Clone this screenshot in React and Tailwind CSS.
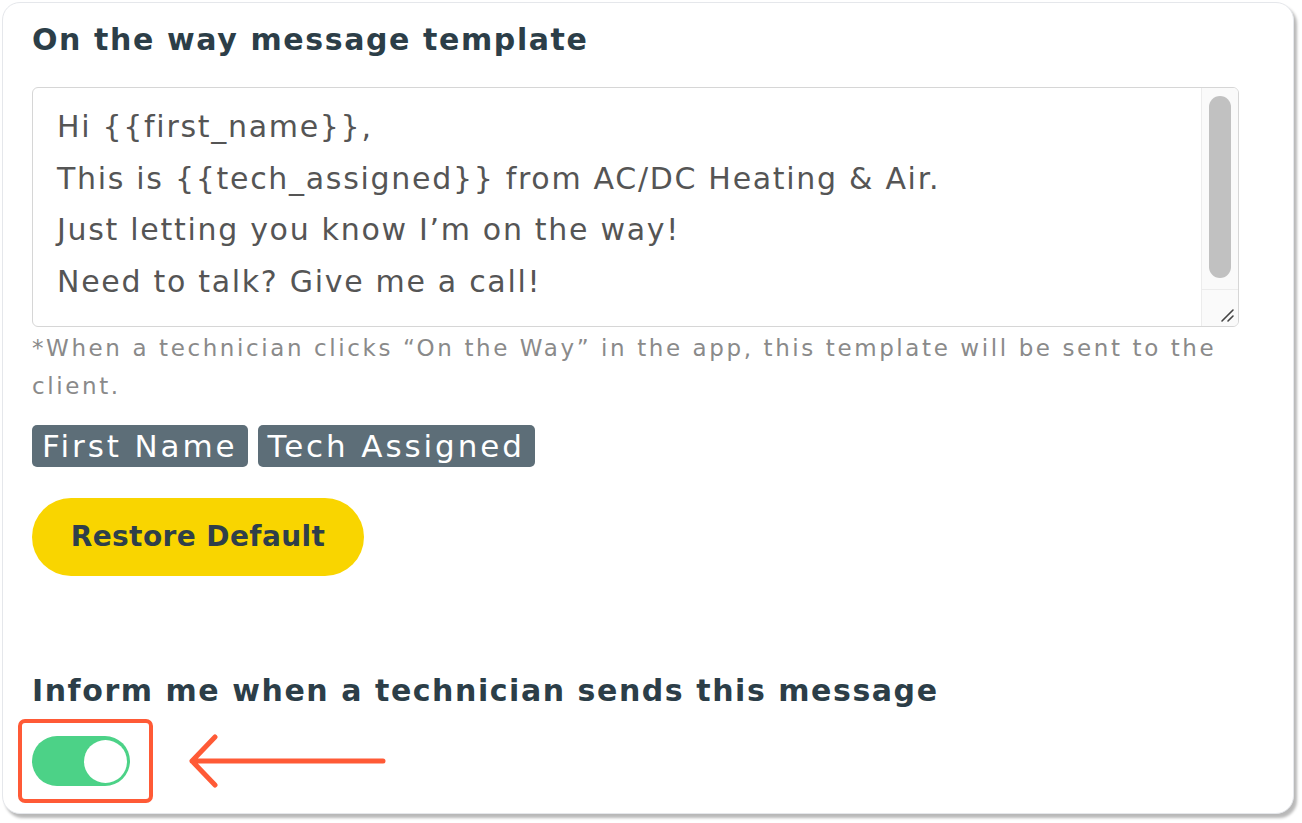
export default function App() {
  const lines = [
    "Hi {{first_name}},",
    "This is {{tech_assigned}} from AC/DC Heating & Air.",
    "Just letting you know I’m on the way!",
    "Need to talk? Give me a call!",
  ];
  return (
    <div className="w-[1302px] h-[823px] bg-white p-[2px] font-['DejaVu_Sans',sans-serif]">
      <div className="w-[1292px] h-[812px] rounded-[18px] border border-gray-200 bg-white shadow-[3px_4px_3px_rgba(0,0,0,0.28)] pl-[29px] pr-[58px] pt-[17px] flex flex-col">
        <h2 className="text-[30px] leading-[40px] font-bold text-[#2c3e48] tracking-[1.6px]">
          On the way message template
        </h2>

        <div className="mt-[27px] h-[240px] w-[1207px] rounded-[6px] border border-[#d6d6d6] flex overflow-hidden">
          <div className="flex-1 pl-[24px] pt-[13px] text-[30px] leading-[51.5px] text-[#555] tracking-[1.7px]">
            {lines.map((l) => (
              <div key={l}>{l}</div>
            ))}
          </div>
          <div className="w-[37px] bg-[#fafafa] border-l border-[#ececec] flex flex-col">
            <div className="flex-1 px-[7px] pt-[8px] pb-[11px]">
              <div className="h-full rounded-full bg-[#c1c1c1]" />
            </div>
            <div className="h-[37px] border-t border-[#ececec] relative">
              <svg className="absolute right-[3px] bottom-[3px]" width="16" height="16" viewBox="0 0 16 16">
                <path d="M14 3 L3 14 M14 9 L9 14" stroke="#444" strokeWidth="1.6" strokeLinecap="round" />
              </svg>
            </div>
          </div>
        </div>

        <p className="mt-[2px] text-[23px] leading-[38px] text-[#8a8a8a] w-[1200px] tracking-[2.6px]">
          *When a technician clicks “On the Way” in the app, this template will be sent to the client.
        </p>

        <div className="mt-[20px] flex gap-[10px]">
          <span className="bg-[#5d6e78] text-white text-[31px] leading-[42px] px-[10px] rounded-[5px] tracking-[2.9px]">
            First Name
          </span>
          <span className="bg-[#5d6e78] text-white text-[31px] leading-[42px] px-[10px] rounded-[5px] tracking-[2.9px]">
            Tech Assigned
          </span>
        </div>

        <button className="mt-[31px] w-[332px] h-[78px] rounded-full bg-[#f9d500] text-[#2f3f4a] text-[28px] font-bold tracking-[0.4px]">
          Restore Default
        </button>

        <h2 className="mt-[95px] text-[30px] leading-[40px] font-bold text-[#2c3e48] tracking-[1.55px]">
          Inform me when a technician sends this message
        </h2>

        <div className="mt-[8px] -ml-[14px] flex items-center">
          <div className="w-[135px] h-[84px] rounded-[7px] border-[4px] border-[#ff5a36] flex items-center pl-[10px]">
            <div className="w-[98px] h-[50px] rounded-full bg-[#4cd287] flex items-center justify-end pr-[3px]">
              <div className="w-[43px] h-[43px] rounded-full bg-white" />
            </div>
          </div>
          <svg className="ml-[35px]" width="200" height="60" viewBox="0 0 200 60">
            <path d="M195 30 H4 M27 6 L4 30 L27 54" stroke="#ff5a36" strokeWidth="5" fill="none" strokeLinecap="round" strokeLinejoin="round" />
          </svg>
        </div>
      </div>
    </div>
  );
}
